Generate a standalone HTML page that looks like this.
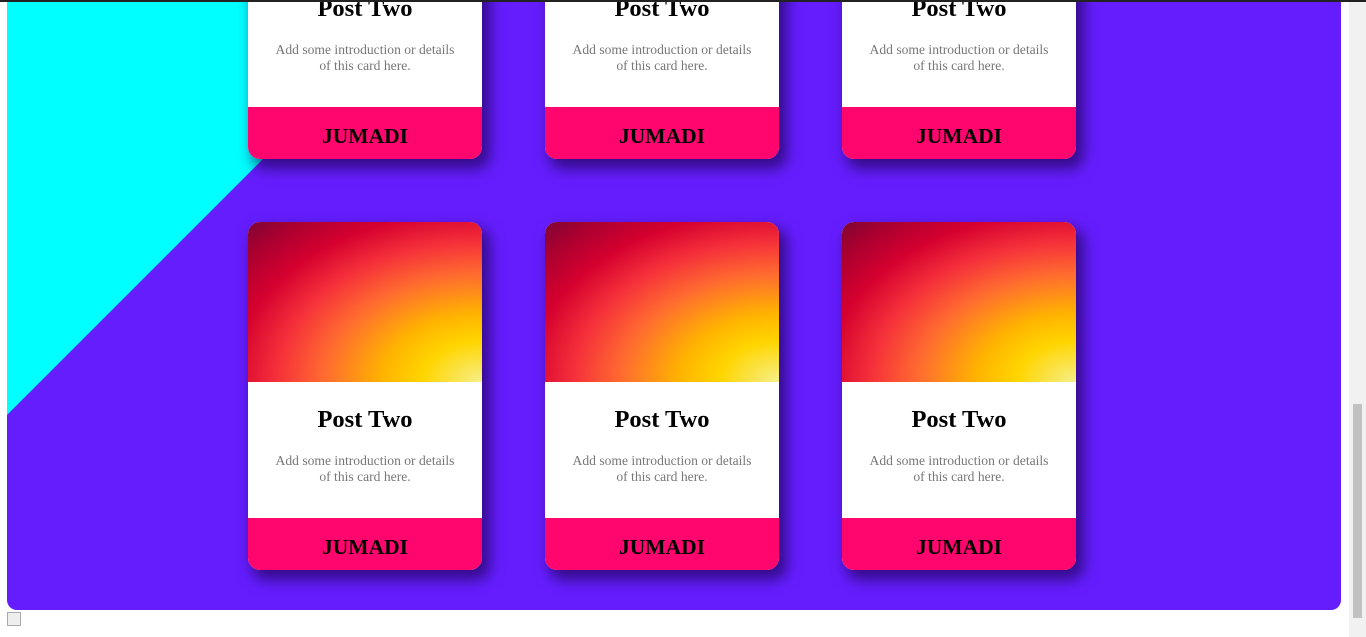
<!DOCTYPE html>
<html><head><style>
html,body{margin:0;padding:0;}
body{width:1366px;height:637px;overflow:hidden;position:relative;background:#fff;font-family:"Liberation Serif",serif;}
.topline{position:absolute;left:0;top:0;width:1366px;height:2px;background:#222;z-index:5}
.wrap{position:absolute;left:7px;top:-40px;width:1334px;height:650px;background:#651dfe;border-radius:0 0 10px 10px;overflow:hidden}
.tri{position:absolute;left:0;top:0;width:0;height:0;border-top:455px solid #00ffff;border-right:455px solid transparent}
.card{position:absolute;width:234px;height:348px;border-radius:12px;overflow:hidden;background:#fff;box-shadow:6px 8px 14px 2px rgba(20,0,60,.6)}
.img{height:160px;background:radial-gradient(ellipse at 100% 100%,#f6ef8a 0%,#ffd500 18%,#ffb400 30%,#ff6a30 48%,#f5303a 62%,#d5002f 76%,#a80030 90%,#5a0a35 108%)}
.t{text-align:center;font-weight:bold;font-size:24.5px;margin-top:23px;height:30px;line-height:30px}
.d{text-align:center;color:#777;font-size:13.6px;line-height:16px;margin-top:18px;height:57px}
.f{position:absolute;left:0;bottom:0;width:234px;height:52px;background:#ff066e;text-align:center;font-weight:bold;font-size:21.5px;line-height:58px}
.sb{position:absolute;right:0;top:0;width:17px;height:637px;background:#f1f1f1}
.th{position:absolute;right:4px;top:404px;width:9px;height:214px;background:#c1c1c1}
</style></head><body>
<div class="topline"></div>
<div class="wrap">
<div class="tri"></div>
<div class="card" style="left:241px;top:-149px"><div class="img"></div><div class="t">Post Two</div><div class="d">Add some introduction or details<br>of this card here.</div><div class="f">JUMADI</div></div>
<div class="card" style="left:538px;top:-149px"><div class="img"></div><div class="t">Post Two</div><div class="d">Add some introduction or details<br>of this card here.</div><div class="f">JUMADI</div></div>
<div class="card" style="left:835px;top:-149px"><div class="img"></div><div class="t">Post Two</div><div class="d">Add some introduction or details<br>of this card here.</div><div class="f">JUMADI</div></div>
<div class="card" style="left:241px;top:262px"><div class="img"></div><div class="t">Post Two</div><div class="d">Add some introduction or details<br>of this card here.</div><div class="f">JUMADI</div></div>
<div class="card" style="left:538px;top:262px"><div class="img"></div><div class="t">Post Two</div><div class="d">Add some introduction or details<br>of this card here.</div><div class="f">JUMADI</div></div>
<div class="card" style="left:835px;top:262px"><div class="img"></div><div class="t">Post Two</div><div class="d">Add some introduction or details<br>of this card here.</div><div class="f">JUMADI</div></div>
</div>
<div style="position:absolute;left:7px;top:612px;width:14px;height:14px;border:1px solid #aaa;box-sizing:border-box;background:#eee"></div>
<div class="sb"><div class="th"></div></div>
</body></html>
